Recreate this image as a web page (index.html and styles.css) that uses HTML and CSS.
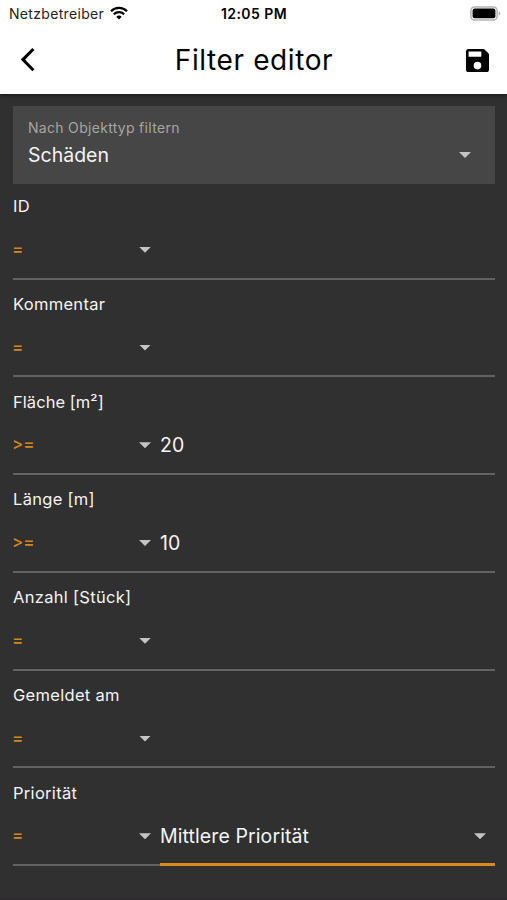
FILE: index.html
```html
<!DOCTYPE html>
<html lang="de">
<head>
    <meta charset="UTF-8">
    <meta name="viewport" content="width=device-width, initial-scale=1.0">
    <title>Filter editor</title>
    <link rel="stylesheet" href="styles.css">
</head>
<body>
    <header class="top">
        <div class="status-bar">
            <div class="carrier">
                <span class="carrier-name">Netzbetreiber</span>
                <svg class="wifi" viewBox="0 0 18 14" width="18" height="14">
                    <path d="M1 5.2a11.4 11.4 0 0 1 16 0" fill="none" stroke="#000" stroke-width="2.3"/>
                    <path d="M3.8 8.3a7.4 7.4 0 0 1 10.4 0" fill="none" stroke="#000" stroke-width="2.2"/>
                    <path d="M9 13.6l-2.7-2.8a3.9 3.9 0 0 1 5.4 0z"/>
                </svg>
            </div>
            <span class="clock">12:05 PM</span>
            <svg class="battery" viewBox="0 0 31 15" width="31" height="15">
                <rect x="0.9" y="0.9" width="26.2" height="13" rx="3.6" fill="#fff" stroke="#b4b4b4" stroke-width="1.5"/>
                <rect x="2.6" y="2.6" width="22.8" height="9.6" rx="2"/>
                <path d="M28.6 5.2c2.2.8 2.2 3.7 0 4.5z" fill="#b4b4b4"/>
            </svg>
        </div>
        <div class="app-bar">
            <svg class="back" viewBox="0 0 16 26" width="16" height="26">
                <path d="M13.4 2L2.9 12.6l10.5 10.6" fill="none" stroke="#000" stroke-width="3"/>
            </svg>
            <h1 class="title">Filter editor</h1>
            <svg class="save" viewBox="3 3 18 18" width="23" height="23">
                <path d="M16.6 3H5a2 2 0 0 0-2 2v14a2 2 0 0 0 2 2h14a2 2 0 0 0 2-2V7.4a1.6 1.6 0 0 0-.5-1.1l-2.8-2.8a1.6 1.6 0 0 0-1.1-.5zM12 19a3 3 0 1 1 0-6 3 3 0 0 1 0 6zm3-10H5V5h10v4z"/>
            </svg>
        </div>
    </header>

    <main class="content">
        <div class="type-select">
            <div class="type-text">
                <span class="type-label">Nach Objekttyp filtern</span>
                <span class="type-value">Schäden</span>
            </div>
            <span class="arrow"></span>
        </div>

        <div class="filters">
            <div class="filter">
                <div class="label">ID</div>
                <div class="controls">
                    <div class="operator"><span class="sign">=</span><span class="arrow"></span></div>
                    <div class="value"></div>
                </div>
            </div>
            <div class="filter">
                <div class="label">Kommentar</div>
                <div class="controls">
                    <div class="operator"><span class="sign">=</span><span class="arrow"></span></div>
                    <div class="value"></div>
                </div>
            </div>
            <div class="filter">
                <div class="label area">Fläche [m²]</div>
                <div class="controls">
                    <div class="operator"><span class="sign">&gt;=</span><span class="arrow"></span></div>
                    <div class="value">20</div>
                </div>
            </div>
            <div class="filter">
                <div class="label">Länge [m]</div>
                <div class="controls">
                    <div class="operator"><span class="sign">&gt;=</span><span class="arrow"></span></div>
                    <div class="value">10</div>
                </div>
            </div>
            <div class="filter">
                <div class="label">Anzahl [Stück]</div>
                <div class="controls">
                    <div class="operator"><span class="sign">=</span><span class="arrow"></span></div>
                    <div class="value"></div>
                </div>
            </div>
            <div class="filter">
                <div class="label">Gemeldet am</div>
                <div class="controls">
                    <div class="operator"><span class="sign">=</span><span class="arrow"></span></div>
                    <div class="value"></div>
                </div>
            </div>
            <div class="filter">
                <div class="label">Priorität</div>
                <div class="controls">
                    <div class="operator"><span class="sign">=</span><span class="arrow"></span></div>
                    <div class="value active"><span class="value-text">Mittlere Priorität</span><span class="arrow"></span></div>
                </div>
            </div>
        </div>
    </main>
</body>
</html>
```
FILE: styles.css
```css
* {
    box-sizing: border-box;
}
body {
    font-family: Inter, "Liberation Sans", sans-serif;
    background-color: #303030;
    color: #f4f4f4;
    margin: 0;
    height: 900px;
    overflow: hidden;
    border-bottom: 1px solid #2b252c;
}
.top {
    height: 94px;
    background: #fff;
    color: #000;
    box-shadow: 0 1px 4px rgba(0, 0, 0, 0.6);
}
.status-bar {
    display: grid;
    grid-template-columns: 1fr auto 1fr;
    align-items: center;
    height: 27px;
    padding: 0 6px 0 9px;
}
.carrier {
    display: flex;
    align-items: center;
    gap: 6px;
    font-size: 14px;
    letter-spacing: 0.32px;
    color: #222;
}
.wifi {
    margin-top: -2px;
}
.clock {
    font-size: 14px;
    font-weight: 600;
    letter-spacing: 0.45px;
    margin-right: 2px;
}
.battery {
    justify-self: end;
}
.app-bar {
    display: flex;
    align-items: center;
    justify-content: space-between;
    height: 66px;
    padding: 0 18px 0 20px;
}
.title {
    margin: 0 0 0 6px;
    font-size: 28px;
    font-weight: 400;
    letter-spacing: 0.6px;
}
.content {
    padding: 12px 12px 0 13px;
}
.type-select {
    display: flex;
    justify-content: space-between;
    height: 78px;
    padding: 12px 24px 0 15px;
    background: #464646;
}
.type-text {
    display: flex;
    flex-direction: column;
}
.type-label {
    font-size: 14px;
    line-height: 19px;
    letter-spacing: 0.3px;
    color: #a5a5a5;
}
.type-value {
    font-size: 19.5px;
    line-height: 36px;
}
.type-select .arrow {
    margin-top: 34px;
}
.arrow {
    width: 12px;
    height: 6px;
    background: #c4c4c4;
    clip-path: polygon(0 0, 100% 0, 50% 100%);
}
.filters {
    display: flex;
    flex-direction: column;
    gap: 2.25px;
}
.filter {
    height: 95.5px;
    padding-top: 10px;
}
.label {
    height: 24px;
    font-size: 16.5px;
    line-height: 24px;
    letter-spacing: 0.3px;
}
.label.area {
    letter-spacing: 0.05px;
}
.controls {
    display: flex;
    height: 61.5px;
}
.operator {
    display: flex;
    align-items: center;
    justify-content: space-between;
    width: 147px;
    padding: 4px 9px 0 0;
    border-bottom: 2px solid #626262;
    font-size: 17px;
    font-weight: 500;
    color: #d58818;
}
.sign {
    margin: 0 0 2px -1px;
}
.value {
    display: flex;
    flex: 1;
    align-items: center;
    justify-content: space-between;
    padding: 4px 9px 0 0;
    border-bottom: 2px solid #626262;
    font-size: 19.5px;
    letter-spacing: 0.1px;
}
.value.active {
    padding-top: 5px;
    border-bottom: 3px solid #dc8a1c;
}
```
